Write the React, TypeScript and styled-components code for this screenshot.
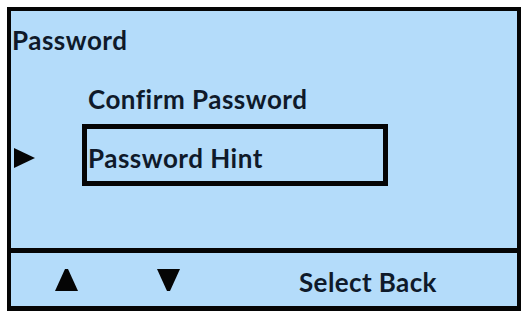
import { createGlobalStyle, styled } from 'styled-components';

const GlobalStyle = createGlobalStyle`
  html, body {
    margin: 0;
    padding: 0;
    background: #fff;
  }
  body {
    font-family: Lato, "Open Sans", sans-serif;
  }
`;

const menuItems = ['Confirm Password', 'Password Hint'];
const selected = 1;

const Screen = styled.div`
  box-sizing: border-box;
  margin: 7px 0 0 7px;
  width: 514px;
  height: 304px;
  display: flex;
  flex-direction: column;
  border: 4px solid #050505;
  border-bottom-width: 5px;
  background: #b4dcfa;
  color: #0f1a2a;
  font-family: Lato, "Open Sans", sans-serif;
  font-weight: 700;
`;

const Body = styled.div`
  flex: 1;
  padding: 13px 0 0 1px;
`;

const Title = styled.div`
  font-size: 26px;
  line-height: 32px;
  letter-spacing: 0.5px;
`;

const Menu = styled.div`
  display: flex;
  flex-direction: column;
  margin-top: 9px;
`;

const Row = styled.div`
  display: flex;
  align-items: center;

  & + & {
    margin-top: -3px;
  }
`;

const Pointer = styled.div`
  width: 68px;
  padding-left: 2px;
  padding-top: 6px;
  display: flex;
  align-items: center;
`;

const Item = styled.div<{ $active: boolean }>`
  box-sizing: border-box;
  width: 306px;
  height: 62px;
  padding: 13px 0 0 1px;
  border: 5px solid ${(p) => (p.$active ? '#050505' : 'transparent')};
  font-size: 26px;
  line-height: 32px;
  letter-spacing: 0.5px;
`;

const Footer = styled.div`
  height: 53px;
  border-top: 5px solid #050505;
  display: flex;
  align-items: center;
  padding-left: 44px;
`;

const KeyIcon = styled.svg`
  display: block;
  margin-top: 1px;
`;

const DownKey = styled(KeyIcon)`
  margin-left: 79px;
`;

const SoftKeys = styled.div`
  margin-left: 119px;
  padding-top: 5px;
  font-size: 26px;
  line-height: 30px;
  letter-spacing: 0.4px;
`;

export default function App() {
  return (
    <>
      <GlobalStyle />
      <Screen>
        <Body>
          <Title>Password</Title>
          <Menu>
            {menuItems.map((label, i) => (
              <Row key={label}>
                <Pointer>
                  {i === selected && (
                    <svg width="21" height="20" viewBox="0 0 21 20">
                      <polygon points="0,0 21,10 0,20" fill="#050505" />
                    </svg>
                  )}
                </Pointer>
                <Item $active={i === selected}>{label}</Item>
              </Row>
            ))}
          </Menu>
        </Body>
        <Footer>
          <KeyIcon width="23" height="22" viewBox="0 0 23 22">
            <polygon points="10,0 13,0 23,22 0,22" fill="#050505" />
          </KeyIcon>
          <DownKey width="23" height="22" viewBox="0 0 23 22">
            <polygon points="0,0 23,0 13,22 10,22" fill="#050505" />
          </DownKey>
          <SoftKeys>Select Back</SoftKeys>
        </Footer>
      </Screen>
    </>
  );
}
